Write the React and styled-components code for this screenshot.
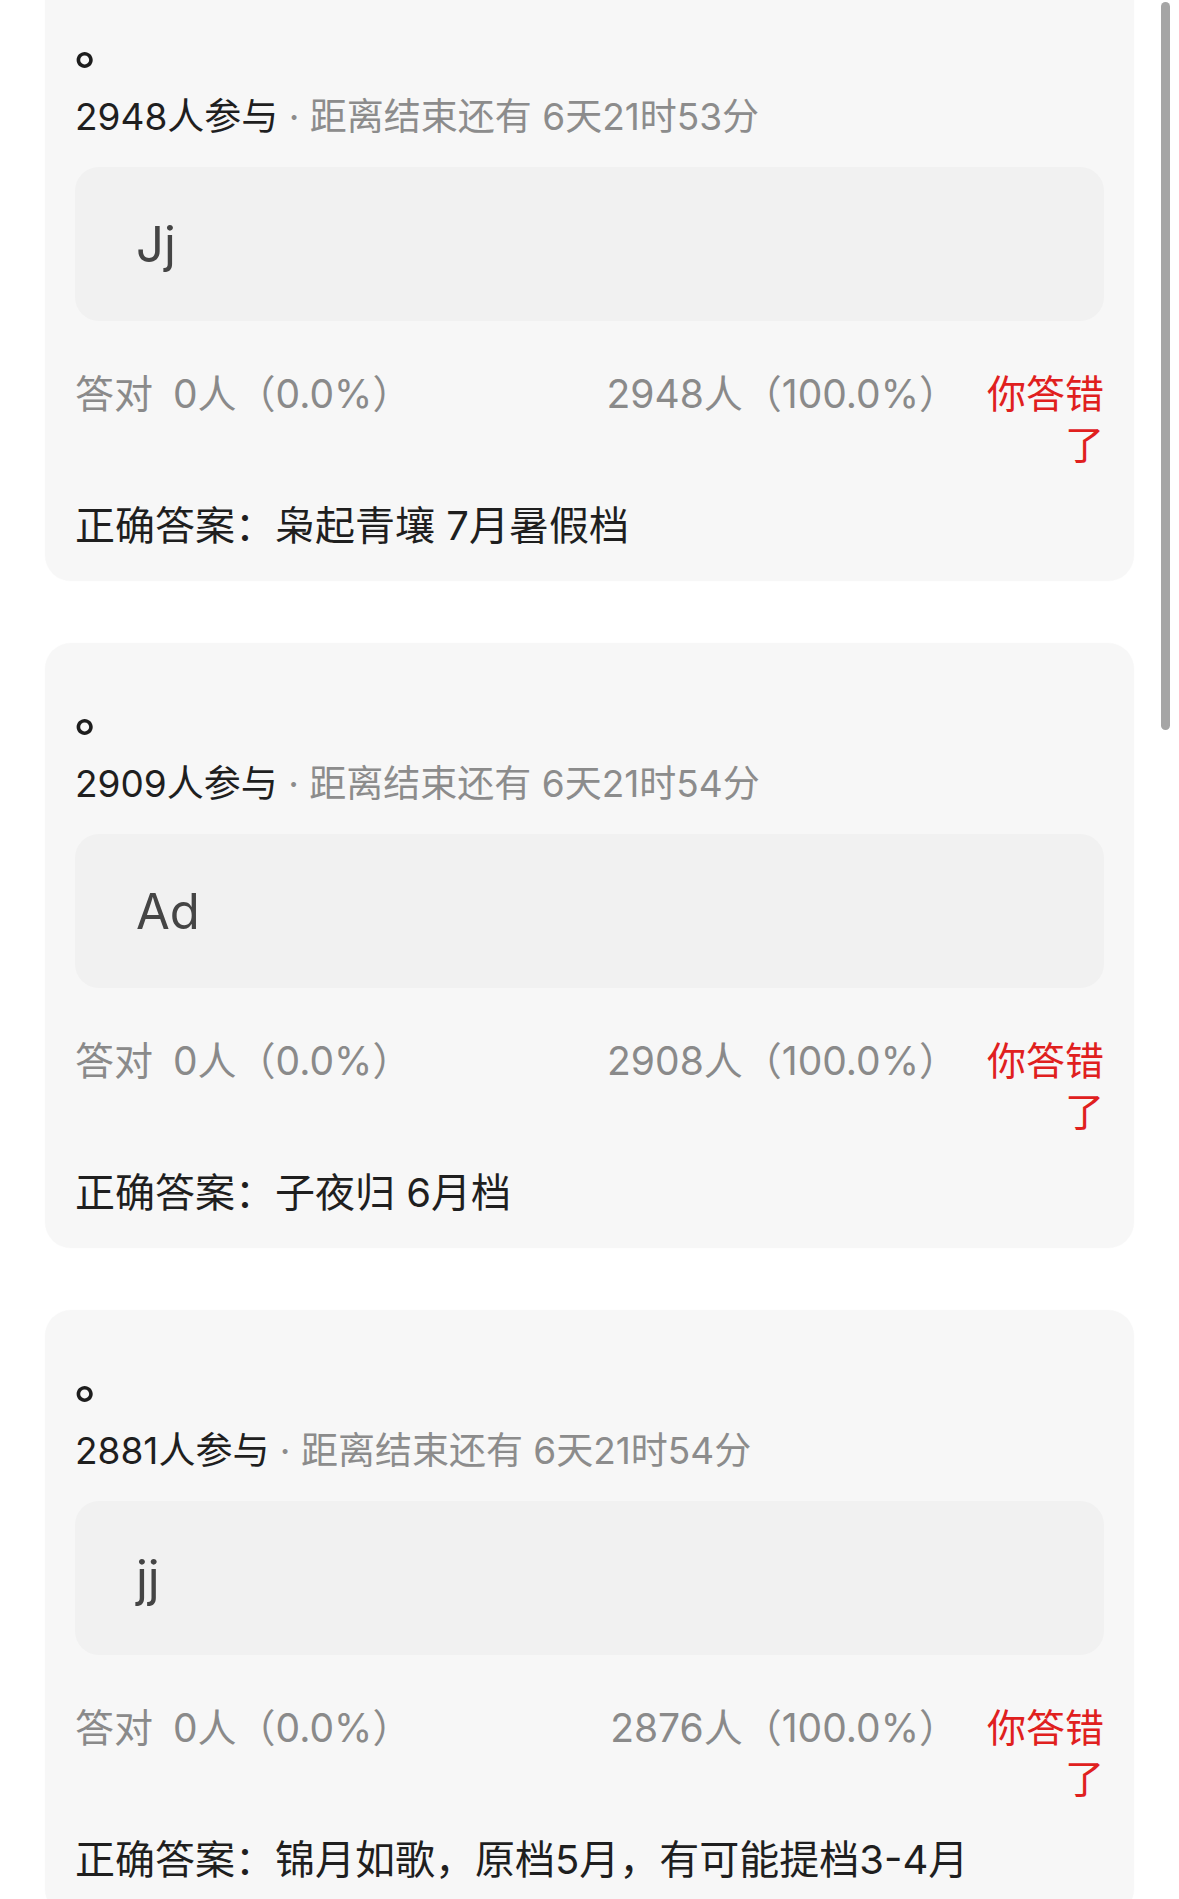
import React from "react";
import styled, { createGlobalStyle } from "styled-components";

const GlobalStyle = createGlobalStyle`
  html, body {
    margin: 0;
    padding: 0;
    background: #ffffff;
    overflow: hidden;
  }
  body {
    font-family: "Inter", "Noto Sans CJK SC", sans-serif;
    -webkit-font-smoothing: antialiased;
  }
`;

const Page = styled.main`
  height: 1899px;
  overflow: hidden;
`;

const List = styled.div`
  display: flex;
  flex-direction: column;
  gap: 62px;
  margin-top: -24px;
`;

const Card = styled.section`
  margin: 0 45px;
  padding: 40px 30px 30px;
  background: #f7f7f7;
  border-radius: 26px;
  box-shadow: 0 0 2px rgba(0, 0, 0, 0.02);
`;

const Title = styled.h2`
  margin: 0;
  font-size: 50px;
  line-height: 60px;
  font-weight: 700;
  color: #1d1d1d;
`;

const Meta = styled.div`
  margin-top: 16px;
  font-size: 37px;
  line-height: 50px;
  color: #1f1f1f;
`;

const Muted = styled.span`
  color: #8c8c8c;
`;

const OptionBox = styled.div`
  margin-top: 25px;
  height: 154px;
  display: flex;
  align-items: center;
  padding-left: 61px;
  background: #f1f1f1;
  border-radius: 24px;
  font-size: 49px;
  color: #454545;
`;

const StatRow = styled.div`
  margin-top: 47px;
  display: flex;
  align-items: flex-start;
  font-size: 39px;
  line-height: 51px;
  color: #8a8a8a;
`;

const StatLeft = styled.div`
  flex: 1;
`;

const StatLabel = styled.span`
  margin-right: 20px;
`;

const StatMid = styled.div`
  white-space: nowrap;
`;

const Verdict = styled.div`
  width: 120px;
  margin-left: 26px;
  text-align: right;
  color: ${(p) => (p.$wrong ? "#e0201e" : "#2aa245")};
`;

const Answer = styled.div`
  margin-top: 30px;
  font-size: 40px;
  line-height: 51px;
  color: #1f1f1f;
`;

const Scrollbar = styled.div`
  position: fixed;
  top: 2px;
  right: 9px;
  width: 9px;
  height: 728px;
  border-radius: 5px;
  background: #a5a5a5;
`;

const quizzes = [
  {
    id: 1,
    joined: 2948,
    left: "6天21时53分",
    option: "Jj",
    right: "0人（0.0%）",
    other: "2948人（100.0%）",
    answer: "枭起青壤 7月暑假档",
  },
  {
    id: 2,
    joined: 2909,
    left: "6天21时54分",
    option: "Ad",
    right: "0人（0.0%）",
    other: "2908人（100.0%）",
    answer: "子夜归 6月档",
  },
  {
    id: 3,
    joined: 2881,
    left: "6天21时54分",
    option: "jj",
    right: "0人（0.0%）",
    other: "2876人（100.0%）",
    answer: "锦月如歌，原档5月，有可能提档3-4月",
  },
];

function QuizCard({ quiz }) {
  return (
    <Card>
      <Title>。</Title>
      <Meta>
        {quiz.joined}人参与 <Muted>· 距离结束还有 {quiz.left}</Muted>
      </Meta>
      <OptionBox>{quiz.option}</OptionBox>
      <StatRow>
        <StatLeft>
          <StatLabel>答对</StatLabel>
          {quiz.right}
        </StatLeft>
        <StatMid>{quiz.other}</StatMid>
        <Verdict $wrong>你答错了</Verdict>
      </StatRow>
      <Answer>正确答案：{quiz.answer}</Answer>
    </Card>
  );
}

export default function App() {
  return (
    <Page>
      <GlobalStyle />
      <List>
        {quizzes.map((q) => (
          <QuizCard key={q.id} quiz={q} />
        ))}
      </List>
      <Scrollbar />
    </Page>
  );
}
